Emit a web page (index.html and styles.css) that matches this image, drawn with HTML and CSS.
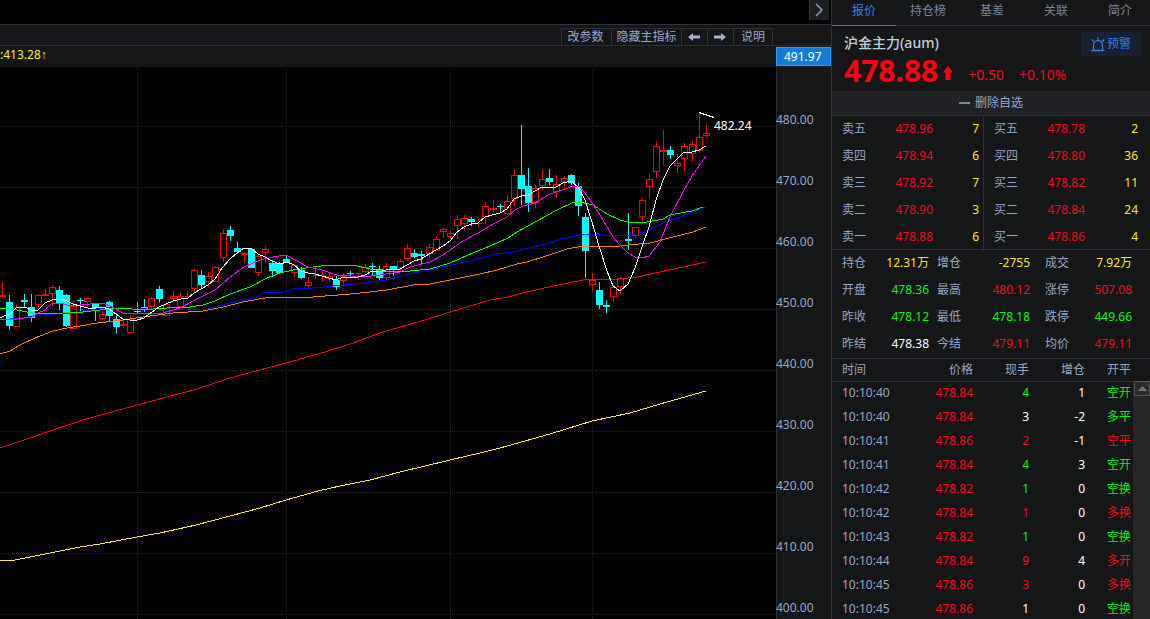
FILE: index.html
```html
<!DOCTYPE html>
<html lang="zh-CN">
<head>
<meta charset="utf-8">
<title>沪金主力(aum)</title>
<link rel="stylesheet" href="styles.css">
</head>
<body>
<main class="chart-pane">
  <div class="top-strip">
    <button class="collapse" type="button" aria-label="收起"><svg width="20" height="20" viewBox="0 0 20 20"><path d="M6 4l6 6-6 6" fill="none" stroke="#8f9bb8" stroke-width="1.5"/></svg></button>
  </div>
  <div class="toolbar">
    <button type="button">改参数</button>
    <button type="button" class="wide">隐藏主指标</button>
    <button type="button" class="arrow" aria-label="左移"><svg width="12" height="8" viewBox="0 0 12 8"><path d="M0 4L5 0V2.500H12V5.500H5V8z" fill="#9fb2d8"/></svg></button>
    <button type="button" class="arrow" aria-label="右移"><svg width="12" height="8" viewBox="0 0 12 8"><path d="M12 4L7 0V2.500H0V5.500H7V8z" fill="#9fb2d8"/></svg></button>
    <button type="button" class="help">说明</button>
  </div>
  <div class="plot-row">
    <section class="plot">
      <div class="indicator">:413.28<span>↑</span></div>
      <svg class="chart" viewBox="0 66 776 553" preserveAspectRatio="xMinYMin slice" role="img" aria-label="K线图">
        <g id="grid" class="grid"></g>
        <g id="candles"></g>
        <g id="lines" class="lines"></g>
        <path d="M699 112.500L714 117.500" class="pointer"/>
        <text x="714" y="130" class="peak">482.24</text>
      </svg>
    </section>
    <aside class="axis">
      <div class="cursor-price">491.97</div>
      <ol class="scale">
        <li>480.00</li><li>470.00</li><li>460.00</li><li>450.00</li><li>440.00</li><li>430.00</li><li>420.00</li><li>410.00</li><li>400.00</li>
      </ol>
    </aside>
  </div>
</main>
<aside class="quote">
  <nav class="tabs">
    <a href="#quote" class="active">报价</a><a href="#rank">持仓榜</a><a href="#basis">基差</a><a href="#related">关联</a><a href="#intro">简介</a>
  </nav>
  <header class="summary">
    <div class="name-row">
      <h1>沪金主力(aum)</h1>
      <button type="button" class="alert"><svg width="14" height="15" viewBox="0 0 14 15" fill="none" stroke="#2f7fe6" stroke-width="1.300"><path d="M.500 13.500H13.500M2.500 13V8a4.500 4.500 0 0 1 9 0V13M7 .500V3M1 2.500l1.500 2M13 2.500l-1.500 2"/></svg>预警</button>
    </div>
    <div class="price-row">
      <strong>478.88</strong>
      <svg width="10" height="14" viewBox="0 0 10 14"><path d="M5 0L10 6.500H7.500V14H2.500V6.500H0z" fill="#ff0010"/></svg>
      <span>+0.50</span><span>+0.10%</span>
    </div>
  </header>
  <button type="button" class="remove"><i></i>删除自选</button>
  <div class="book">
    <table>
      <tr><th>卖五</th><td class="r">478.96</td><td class="y">7</td></tr>
      <tr><th>卖四</th><td class="r">478.94</td><td class="y">6</td></tr>
      <tr><th>卖三</th><td class="r">478.92</td><td class="y">7</td></tr>
      <tr><th>卖二</th><td class="r">478.90</td><td class="y">3</td></tr>
      <tr><th>卖一</th><td class="r">478.88</td><td class="y">6</td></tr>
    </table>
    <table class="bids">
      <tr><th>买五</th><td class="r">478.78</td><td class="y">2</td></tr>
      <tr><th>买四</th><td class="r">478.80</td><td class="y">36</td></tr>
      <tr><th>买三</th><td class="r">478.82</td><td class="y">11</td></tr>
      <tr><th>买二</th><td class="r">478.84</td><td class="y">24</td></tr>
      <tr><th>买一</th><td class="r">478.86</td><td class="y">4</td></tr>
    </table>
  </div>
  <dl class="stats">
    <div><dt>持仓</dt><dd class="y">12.31万</dd></div><div><dt>增仓</dt><dd class="y">-2755</dd></div><div><dt>成交</dt><dd class="y">7.92万</dd></div>
    <div><dt>开盘</dt><dd class="g">478.36</dd></div><div><dt>最高</dt><dd class="r">480.12</dd></div><div><dt>涨停</dt><dd class="r">507.08</dd></div>
    <div><dt>昨收</dt><dd class="g">478.12</dd></div><div><dt>最低</dt><dd class="g">478.18</dd></div><div><dt>跌停</dt><dd class="g">449.66</dd></div>
    <div><dt>昨结</dt><dd class="w">478.38</dd></div><div><dt>今结</dt><dd class="r">479.11</dd></div><div><dt>均价</dt><dd class="r">479.11</dd></div>
  </dl>
  <div class="ticks">
    <table>
      <colgroup><col class="c-time"><col class="c-price"><col class="c-num"><col class="c-num"><col class="c-kind"><col></colgroup>
      <thead><tr><th>时间</th><th>价格</th><th>现手</th><th>增仓</th><th>开平</th><th></th></tr></thead>
      <tbody>
        <tr><td>10:10:40</td><td class="r">478.84</td><td class="g">4</td><td class="w">1</td><td class="g">空开</td></tr>
        <tr><td>10:10:40</td><td class="r">478.84</td><td class="w">3</td><td class="w">-2</td><td class="g">多平</td></tr>
        <tr><td>10:10:41</td><td class="r">478.86</td><td class="r">2</td><td class="w">-1</td><td class="r">空平</td></tr>
        <tr><td>10:10:41</td><td class="r">478.84</td><td class="g">4</td><td class="w">3</td><td class="g">空开</td></tr>
        <tr><td>10:10:42</td><td class="r">478.82</td><td class="g">1</td><td class="w">0</td><td class="g">空换</td></tr>
        <tr><td>10:10:42</td><td class="r">478.84</td><td class="r">1</td><td class="w">0</td><td class="r">多换</td></tr>
        <tr><td>10:10:43</td><td class="r">478.82</td><td class="g">1</td><td class="w">0</td><td class="g">空换</td></tr>
        <tr><td>10:10:44</td><td class="r">478.84</td><td class="r">9</td><td class="w">4</td><td class="r">多开</td></tr>
        <tr><td>10:10:45</td><td class="r">478.86</td><td class="r">3</td><td class="w">0</td><td class="r">多换</td></tr>
        <tr><td>10:10:45</td><td class="r">478.86</td><td class="w">1</td><td class="w">0</td><td class="g">空换</td></tr>
      </tbody>
    </table>
    <div class="scrollbar"><button type="button" aria-label="向上滚动"><svg width="9" height="5" viewBox="0 0 9 5"><path d="M4.500 0L9 5H0z" fill="#777"/></svg></button></div>
  </div>
</aside>
<script src="chart.js"></script>
</body>
</html>
```

FILE: styles.css
```css
* { box-sizing: border-box; }
html, body { height: 100%; }
body {
  margin: 0;
  display: flex;
  overflow: hidden;
  background: #000;
  color: #94a7cc;
  font: 12px/18px "Noto Sans", "Noto Sans CJK SC", sans-serif;
}
button {
  margin: 0;
  padding: 0;
  border: 0;
  background: none;
  color: inherit;
  font: inherit;
}
svg { display: block; }
table { border-collapse: collapse; table-layout: fixed; }
th, td { padding: 0; font-weight: 400; text-align: right; }
.r { color: #f20d16; }
.g { color: #00f510; }
.y { color: #ffe81a; }
.w { color: #fff; }

/* chart side */
.chart-pane { flex: 1; min-width: 0; display: flex; flex-direction: column; }
.top-strip {
  height: 25px;
  display: flex;
  justify-content: flex-end;
  padding-right: 2px;
  border-bottom: 1px solid #30343a;
}
.collapse { width: 20px; height: 20px; background: #1d1f22; border-left: 1px solid #34373c; }
.toolbar {
  height: 21px;
  display: flex;
  justify-content: flex-end;
  padding: 3px 58px 0 0;
  background: #151617;
  border-bottom: 1px solid #2a2d32;
}
.toolbar button {
  display: flex;
  align-items: center;
  justify-content: center;
  width: 50px;
  padding-right: 2px;
  border: 1px solid #2c3036;
  border-width: 1px 0 0 1px;
}
.toolbar .wide { width: 70px; padding-right: 0; }
.toolbar .arrow { width: 26px; }
.toolbar .help { width: 40px; padding-right: 0; border-right-width: 1px; }
.plot-row { flex: 1; min-height: 0; display: flex; background: #151617; }
.plot { flex: 1; min-width: 0; display: flex; flex-direction: column; }
.indicator { height: 20px; color: #f5ee30; }
.indicator span { font-family: "Liberation Sans", sans-serif; }
.chart { flex: 1; min-height: 0; width: 100%; background: #000; }
.grid { stroke: #24252b; stroke-dasharray: 1 1; shape-rendering: crispEdges; }
.lines { fill: none; shape-rendering: crispEdges; }
.candle { shape-rendering: crispEdges; }
.candle.up { stroke: #f00; fill: none; }
.candle.down { stroke: #0ff; fill: #0ff; }
.pointer { stroke: #fff; shape-rendering: crispEdges; }
.peak { fill: #fff; font-size: 12px; }
.axis { width: 55px; overflow: hidden; background: linear-gradient(#2a2d32, #2a2d32) left / 1px 100% no-repeat; }
.cursor-price {
  height: 19px;
  margin-top: 1px;
  padding-left: 7px;
  line-height: 17px;
  color: #fff;
  background: #117bd8;
  border: 1px solid #2c99fc;
}
.scale { margin: 45px 0 0; padding: 0; list-style: none; }
.scale li { height: 61px; }

/* quote side */
.quote {
  width: 319px;
  display: flex;
  flex-direction: column;
  background: #151617;
  border-left: 1px solid #30333a;
}
.tabs { display: grid; grid-template-columns: repeat(5, 64px); height: 26px; overflow: hidden; }
.tabs a {
  padding-top: 2px;
  text-align: center;
  text-decoration: none;
  color: #78849c;
  border-bottom: 1px solid #30333a;
}
.tabs .active { color: #2e80e8; border-color: #2e80e8; }
.summary { height: 65px; padding: 6px 9px 0 12px; }
.name-row { display: flex; justify-content: space-between; }
h1 { margin: 2px 0 0; font-size: 14px; line-height: 18px; font-weight: 500; color: #c5cedc; }
.alert {
  width: 60px;
  height: 24px;
  display: flex;
  align-items: center;
  justify-content: center;
  gap: 2px;
  border-radius: 4px;
  background: #192130;
  color: #2f7fe6;
}
.price-row {
  display: flex;
  align-items: center;
  height: 30px;
  color: #f20d16;
  font-size: 14px;
}
.price-row strong { margin-right: 5px; font-size: 30px; line-height: 30px; color: #ff0010; }
.price-row svg { margin-top: 4px; }
.price-row span { margin: 8px 0 0 15px; }
.remove {
  height: 25px;
  display: flex;
  align-items: center;
  justify-content: center;
  gap: 5px;
  background: #202226;
  border-bottom: 1px solid #2d3035;
}
.remove i { width: 11px; height: 2px; background: #7d889f; }
.book { display: flex; height: 134px; border-bottom: 1px solid #2d3035; }
.book table { width: 152px; border-right: 1px solid #2d3035; border-collapse: separate; border-spacing: 0; }
.book .bids { flex: 1; border-right: 0; }
.book tr { height: 27px; }
.book th, .book td { padding-bottom: 2px; }
.book th { width: 34px; padding-left: 10px; text-align: left; }
.book td:nth-child(2) { width: 67px; }
.book td:last-child { padding-right: 4px; }
.book .bids td:last-child { padding-right: 12px; }
.stats {
  display: grid;
  grid-template-columns: 87px 93px 87px;
  column-gap: 8px;
  row-gap: 0;
  grid-auto-rows: 27px;
  margin: 0;
  padding: 0 0 0 10px;
  border-bottom: 1px solid #2d3035;
}
.stats div { display: flex; align-items: center; justify-content: space-between; padding-bottom: 2px; }
.stats div:nth-child(3n) { margin-left: 7px; margin-right: -7px; }
.stats dd { margin: 0; }
.ticks { position: relative; flex: 1; min-height: 0; overflow: hidden; }
.ticks table { width: 100%; }
.ticks thead tr { height: 22px; border-bottom: 1px solid #2d3035; }
.ticks tbody tr { height: 24px; }
.ticks tr > :first-child { padding-left: 10px; text-align: left; }
.c-time { width: 68px; }
.c-price { width: 73px; }
.c-num { width: 56px; }
.c-kind { width: 46px; }
.scrollbar { position: absolute; top: 22px; right: 0; bottom: 0; width: 17px; background: #252525; }
.scrollbar button {
  display: flex;
  align-items: center;
  justify-content: center;
  width: 16px;
  height: 15px;
  margin-left: 1px;
  background: #2c2c2c;
  border: 1px solid #555;
}
```

FILE: chart.js
```js
const NS = 'http://www.w3.org/2000/svg';
function add(parent, tag, attrs) {
  const el = document.createElementNS(NS, tag);
  for (const k in attrs) el.setAttribute(k, attrs[k]);
  parent.appendChild(el);
}

const grid = document.getElementById('grid');
add(grid, 'path', { d: 'M0 66.5H776' });
for (let y = 126; y < 619; y += 61) add(grid, 'path', { d: `M0 ${y + 0.5}H776` });
for (const x of [137, 286, 450, 592]) add(grid, 'path', { d: `M${x + 0.5} 66V619` });

// x, high, body top, body bottom, low, direction (1 = up)
const candles = [
  [2,282,295,296,297,1],[9,295,302,326,330,0],[16,304,307,326,326,1],[24,294,300,302,307,0],[31,294,307,318,322,0],
  [38,294,295,304,307,1],[45,289,294,295,296,1],[52,285,287,293,306,1],[59,286,290,303,310,0],[66,294,295,326,327,0],
  [73,300,306,328,328,1],[80,298,300,301,311,0],[87,297,298,301,306,1],[95,303,303,309,321,0],[102,311,314,318,319,1],
  [109,301,302,316,321,0],[116,313,319,327,333,0],[123,319,324,325,328,1],[130,315,319,332,333,1],[137,302,311,312,313,0],
  [144,299,307,309,312,0],[151,297,298,306,309,1],[159,286,289,299,303,0],[166,303,304,315,316,1],[173,291,296,298,302,1],
  [180,292,296,306,307,1],[187,291,296,296,298,1],[194,269,270,288,292,1],[201,270,275,285,289,0],[208,272,276,281,287,1],
  [215,266,267,281,282,1],[223,229,233,257,262,1],[230,226,230,236,241,0],[237,242,248,252,254,0],[244,252,253,254,263,1],
  [251,248,249,268,268,0],[258,255,256,272,276,1],[265,246,249,252,263,1],[272,260,263,271,277,0],[279,262,263,273,274,0],
  [286,256,259,263,263,0],[294,264,265,272,277,1],[301,267,270,278,279,0],[308,277,282,285,287,1],[315,267,275,275,279,1],
  [322,272,275,275,282,1],[329,272,276,278,281,1],[336,276,280,287,290,0],[343,273,276,280,286,1],[350,271,273,274,278,0],
  [358,273,273,273,280,1],[365,264,267,271,273,1],[372,263,266,267,275,0],[379,266,269,278,280,0],[386,263,266,277,280,1],
  [393,266,266,270,276,0],[400,259,261,267,272,1],[407,244,248,258,261,1],[414,249,253,257,258,0],[421,251,254,256,264,0],
  [429,244,247,253,258,1],[436,236,239,250,251,1],[443,228,229,231,238,1],[450,231,233,236,240,1],[457,215,219,225,239,1],
  [464,215,218,223,229,1],[471,217,219,222,226,0],[478,219,223,223,227,1],[485,202,206,216,224,1],[493,200,208,209,212,1],
  [500,204,206,207,212,0],[507,195,201,213,214,1],[514,169,175,198,206,1],[521,125,175,189,205,0],[528,168,186,203,212,0],
  [535,185,188,202,208,1],[542,170,179,185,190,1],[549,169,178,182,185,0],[556,175,184,191,198,1],[564,176,178,181,190,1],
  [571,174,175,183,185,0],[578,183,186,206,216,0],[585,213,217,251,278,0],[592,273,280,284,291,1],[599,282,290,305,309,0],
  [606,300,305,307,313,0],[613,285,287,296,303,1],[620,277,278,286,294,1],[628,213,239,241,250,0],[635,227,227,235,238,1],
  [642,198,200,216,224,1],[649,174,179,186,198,1],[656,141,146,171,178,1],[663,130,150,151,165,1],[670,146,150,155,159,0],
  [677,154,163,165,173,1],[684,143,146,158,171,1],[692,141,144,153,161,1],[699,113,137,150,153,1],[706,125,133,135,137,1]
];
const layer = document.getElementById('candles');
for (const [x, high, top, bottom, low, up] of candles) {
  const c = x + 0.5;
  if (up) {
    add(layer, 'path', {
      class: 'candle up',
      d: `M${c} ${high}V${top}M${c} ${bottom + 1}V${low}M${c - 3} ${top + 0.5}H${c + 3}V${bottom + 0.5}H${c - 3}Z`
    });
  } else {
    add(layer, 'path', { class: 'candle down', d: `M${c} ${high}V${low}` });
    add(layer, 'rect', { x: x - 3, y: top, width: 7, height: bottom - top, fill: '#0ff', 'shape-rendering': 'crispEdges' });
  }
}

const averages = {
  '#ffe94a': '0,561 15,560 50,553 80,547 100,544 137,537 160,533 196,525 230,516 260,508 286,500 318,491 340,486 370,480 400,472 450,460 480,453 500,448 550,434 592,421 630,413 660,404 706,391',
  '#f00': '0,448 30,438 50,431 83,420 137,405 197,389 230,378 286,363 325,352 350,344 380,333 400,327 425,320 450,312 470,306 490,300 508,297 527,292 553,286 583,280 620,279 637,277 660,272 683,267 706,262',
  '#ff8000': '0,354 10,351 20,345 35,338 53,331 67,328 80,326 97,323 123,320 150,316 173,313 203,311 223,307 243,302 270,297 313,297 350,294 370,292 387,290 413,285 430,284 450,280 480,274 497,270 517,264 527,262 543,257 567,249 583,246 620,246 628,245 650,243 673,237 693,232 706,227',
  '#0000ff': '0,320 20,318 40,315 70,313 90,310 103,308 133,307 147,309 173,310 207,309 230,303 257,297 263,293 283,292 293,289 313,288 333,286 363,283 387,280 410,274 447,266 470,261 497,254 513,252 550,243 560,239 580,235 593,234 613,236 630,235 645,232 663,223 680,217 706,207',
  '#00ff00': '0,308 17,310 32,313 63,313 83,312 100,310 123,308 140,310 167,308 190,307 203,305 215,301 230,294 250,287 267,278 280,273 293,270 313,267 330,265 353,265 370,269 383,271 410,271 430,269 450,263 468,255 490,246 508,238 517,232 537,221 557,210 572,203 580,202 593,205 607,214 620,220 628,222 635,223 647,222 663,219 670,215 692,211 703,207',
  '#ff00ff': '0,319 10,320 17,319 32,317 38,313 45,310 52,303 60,303 67,305 80,305 90,304 103,303 112,307 123,313 132,314 143,313 163,313 173,310 180,308 193,301 215,290 230,277 244,267 260,260 273,257 286,255 297,261 308,267 322,270 337,275 350,276 363,277 380,275 393,273 400,272 410,267 430,262 443,255 463,241 478,233 495,223 507,217 515,210 523,206 535,203 550,194 565,189 573,186 580,187 588,197 600,215 613,237 620,245 628,253 635,257 642,258 649,256 660,242 670,217 684,190 692,176 706,156',
  '#fff': '0,318 4,316 10,314 16,308 18,307 25,307 31,310 38,310 45,303 52,300 60,299 67,301 73,304 80,306 88,308 95,308 102,307 109,309 116,314 123,319 130,320 137,320 144,318 152,312 159,307 166,304 173,301 181,299 188,298 194,293 201,289 208,285 215,279 222,268 230,259 237,253 244,248 251,248 258,254 265,257 272,261 280,264 287,262 294,265 301,271 308,273 315,274 322,276 329,278 336,280 343,277 358,277 365,275 372,271 379,272 386,270 400,269 407,265 414,261 421,259 429,254 436,250 443,246 450,241 457,232 464,227 471,224 478,223 485,217 492,215 500,213 507,209 514,199 521,196 528,195 535,191 542,187 549,188 556,187 563,183 571,181 578,187 585,200 592,222 599,246 607,271 613,286 620,291 628,284 635,268 642,247 649,227 656,200 663,180 670,166 677,159 684,152 692,152 699,150 706,146'
};
for (const color in averages) add(document.getElementById('lines'), 'polyline', { points: averages[color], stroke: color });
```
